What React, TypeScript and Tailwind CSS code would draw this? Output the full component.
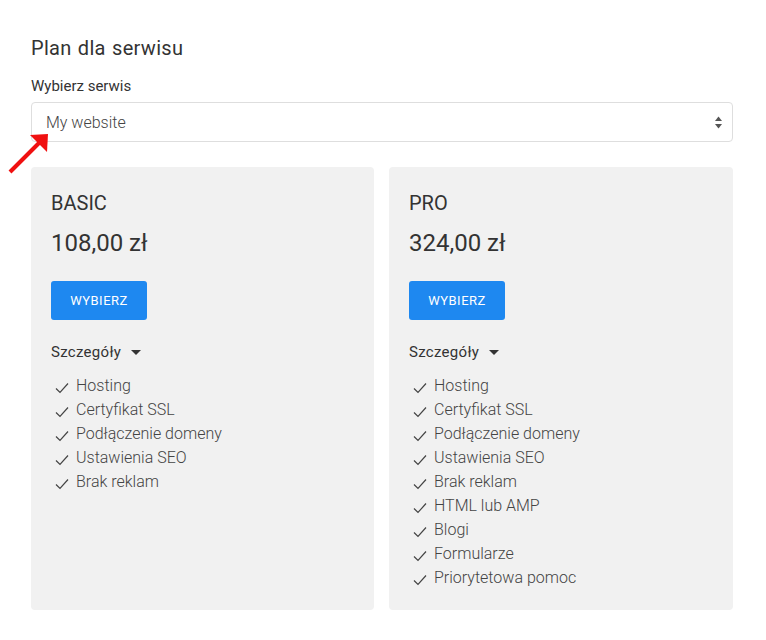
import React from 'react';

type Plan = {
  name: string;
  price: string;
  features: string[];
};

const plans: Plan[] = [
  {
    name: 'BASIC',
    price: '108,00 zł',
    features: ['Hosting', 'Certyfikat SSL', 'Podłączenie domeny', 'Ustawienia SEO', 'Brak reklam'],
  },
  {
    name: 'PRO',
    price: '324,00 zł',
    features: [
      'Hosting',
      'Certyfikat SSL',
      'Podłączenie domeny',
      'Ustawienia SEO',
      'Brak reklam',
      'HTML lub AMP',
      'Blogi',
      'Formularze',
      'Priorytetowa pomoc',
    ],
  },
];

const CheckIcon = () => (
  <svg width="14" height="12" viewBox="0 0 14 12" className="shrink-0 translate-y-[2px]">
    <path d="M1 6.5 L5 10.5 L13 1.5" fill="none" stroke="#444" strokeWidth="1.2" />
  </svg>
);

const PlanCard = ({ plan }: { plan: Plan }) => {
  return (
    <div className="flex flex-col bg-[#f1f1f1] rounded-[4px] px-[20px] pt-[22px] pb-[20px]">
      <p className="text-[20px] leading-[28px] text-[#333]">{plan.name}</p>
      <p className="mt-[10px] text-[24px] leading-[32px] text-[#333]">{plan.price}</p>
      <div>
        <button className="mt-[22px] w-[96px] h-[39px] bg-[#1e88f0] rounded-[3px] text-white text-[13px] tracking-[0.5px]">
          WYBIERZ
        </button>
      </div>
      <div className="mt-[22px] flex items-center text-[15px] leading-[20px] text-[#333] tracking-[0.3px]">
        <span>Szczegóły</span>
        <svg width="10" height="5" viewBox="0 0 10 5" className="ml-[10px]">
          <path d="M0 0 L10 0 L5 5 Z" fill="#333" />
        </svg>
      </div>
      <ul className="mt-[12px] flex flex-col">
        {plan.features.map((f) => (
          <li
            key={f}
            className="flex items-center gap-[7px] text-[16px] font-light leading-[24px] text-[#444]"
          >
            <span className="ml-[4px] flex">
              <CheckIcon />
            </span>
            <span>{f}</span>
          </li>
        ))}
      </ul>
    </div>
  );
};

export default function App() {
  return (
    <div className="relative min-h-[640px] bg-white font-['Roboto',sans-serif]">
      <div className="w-[702px] ml-[31px] pt-[34px]">
        <h1 className="text-[20px] leading-[28px] text-[#333] tracking-[0.3px] [word-spacing:1px]">
          Plan dla serwisu
        </h1>
        <p className="mt-[14px] text-[15px] leading-[20px] text-[#333]">Wybierz serwis</p>
        <div className="mt-[6px] h-[40px] flex items-center justify-between border border-[#dedede] rounded-[4px] pl-[14px] pr-[10px]">
          <span className="pt-[2px] text-[16px] font-light text-[#444]">My website</span>
          <svg width="7" height="13" viewBox="0 0 7 13">
            <path d="M0 5 L7 5 L3.5 0.5 Z" fill="#555" />
            <path d="M0 8 L7 8 L3.5 12.5 Z" fill="#555" />
          </svg>
        </div>
        <div className="mt-[25px] grid grid-cols-[343px_1fr] gap-[15px]">
          {plans.map((p) => (
            <PlanCard key={p.name} plan={p} />
          ))}
        </div>
      </div>
      <svg
        className="absolute left-0 top-0 pointer-events-none"
        width="60"
        height="180"
        viewBox="0 0 60 180"
      >
        <line x1="10" y1="172" x2="40" y2="142" stroke="#f01010" strokeWidth="4" />
        <path d="M48 134 L30 135 L47 152 Z" fill="#f01010" />
      </svg>
    </div>
  );
}
